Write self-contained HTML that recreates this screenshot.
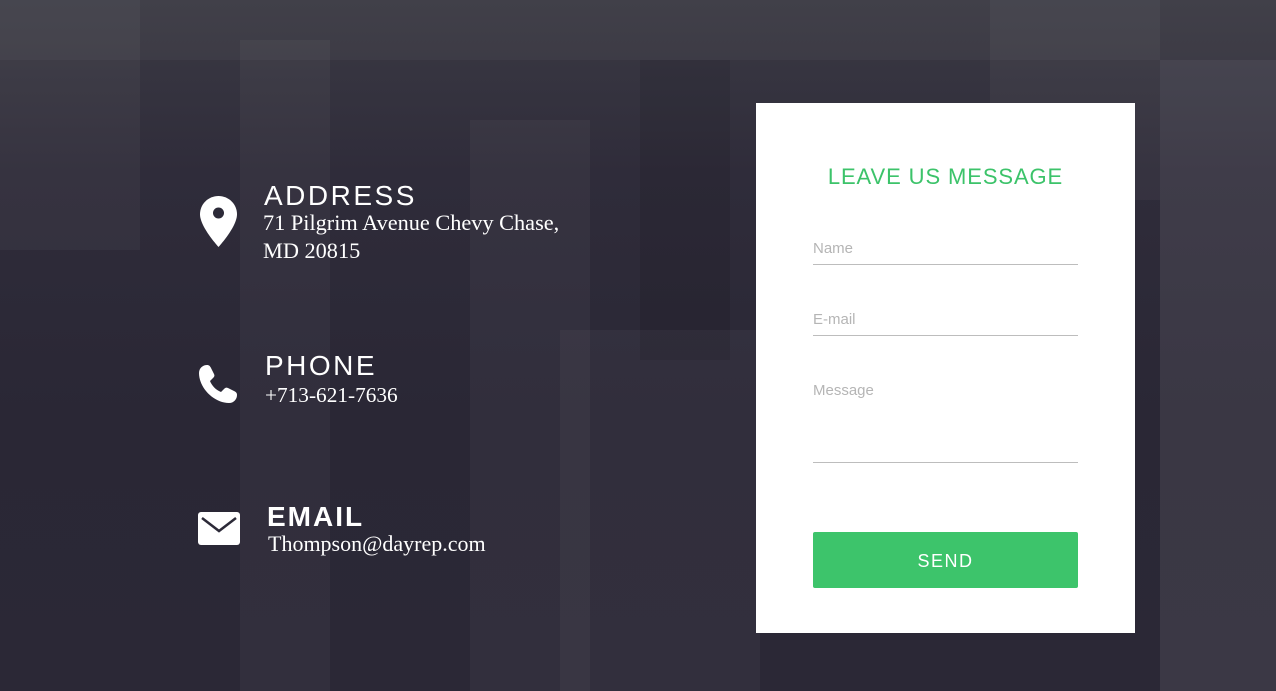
<!DOCTYPE html>
<html><head><meta charset="utf-8"><style>
*{margin:0;padding:0;box-sizing:border-box}
body{width:1276px;height:691px;overflow:hidden;position:relative;font-family:"Liberation Sans",sans-serif;
background:linear-gradient(180deg,#3b3a44 0%,#2f2c3a 25%,#2a2735 60%,#2b2836 100%);}
.b{position:absolute;background:rgba(255,255,255,0.035)}
.d{position:absolute;background:rgba(0,0,0,0.08)}
.h{position:absolute;color:#fff;font-size:28px;letter-spacing:2.5px;font-family:"Liberation Sans",sans-serif}
.t{position:absolute;color:#fff;font-family:"Liberation Serif",serif;font-size:21px;line-height:28px}
.card{position:absolute;left:756px;top:103px;width:379px;height:530px;background:#fff}
.title{position:absolute;top:61px;left:0;width:100%;text-align:center;color:#3cc36a;font-size:22px;letter-spacing:0.9px}
.f{position:absolute;left:57px;width:265px;border-bottom:1px solid #bdbdbd;color:#b5b5b5;font-size:15px;padding-top:3px}
.btn{position:absolute;left:57px;top:429px;width:265px;height:56px;background:#3dc46b;border-radius:2px;color:#fff;text-align:center;line-height:58px;font-size:18px;letter-spacing:1.5px}
</style></head><body>
<div class="b" style="left:240px;top:40px;width:90px;height:651px"></div>
<div class="b" style="left:470px;top:120px;width:120px;height:571px"></div>
<div class="b" style="left:0;top:0;width:140px;height:250px"></div>
<div class="b" style="left:990px;top:0;width:170px;height:200px"></div>
<div class="b" style="left:1160px;top:60px;width:116px;height:631px;background:rgba(255,255,255,0.08)"></div>
<div class="b" style="left:560px;top:330px;width:200px;height:361px"></div>
<div class="d" style="left:640px;top:60px;width:90px;height:300px"></div>
<div class="b" style="left:0;top:0;width:1276px;height:60px;background:rgba(255,255,255,0.03)"></div>

<svg style="position:absolute;left:200px;top:196px" width="37" height="51" viewBox="0 0 37 51"><path d="M18.5 0C8.3 0 0 8.1 0 18.3 0 31 18.5 51 18.5 51S37 31 37 18.3C37 8.1 28.7 0 18.5 0z" fill="#fff"/><circle cx="18.5" cy="17" r="5.5" fill="#2c2a38"/></svg>
<div class="h" style="left:264px;top:180px">ADDRESS</div>
<div class="t" style="left:263px;top:209px;font-size:22.3px">71 Pilgrim Avenue Chevy Chase,<br>MD 20815</div>

<svg style="position:absolute;left:198px;top:364px" width="40" height="40" viewBox="0 0 40 40"><path d="M9 1c2 0 3 1 4 3l3 6c1 2 0 3-1 4l-3 3c2 5 6 9 11 11l3-3c1-1 2-2 4-1l6 3c2 1 3 2 3 4 0 4-3 8-8 8C16 39 1 24 1 9 1 4 5 1 9 1z" fill="#fff"/></svg>
<div class="h" style="left:265px;top:350px">PHONE</div>
<div class="t" style="left:265px;top:381px;font-size:21.3px">+713-621-7636</div>

<svg style="position:absolute;left:198px;top:512px" width="42" height="33" viewBox="0 0 42 33"><rect x="0" y="0" width="42" height="33" rx="3" fill="#fff"/><path d="M4 6l17 13 17-13" stroke="#2c2a38" stroke-width="2.5" fill="none"/></svg>
<div class="h" style="left:267px;top:501px;font-weight:bold;letter-spacing:2px">EMAIL</div>
<div class="t" style="left:268px;top:530px;font-size:22px">Thompson@dayrep.com</div>

<div class="card">
<div class="title">LEAVE US MESSAGE</div>
<div class="f" style="top:134px;height:28px">Name</div>
<div class="f" style="top:205px;height:28px">E-mail</div>
<div class="f" style="top:276px;height:84px">Message</div>
<div class="btn">SEND</div>
</div>
</body></html>
